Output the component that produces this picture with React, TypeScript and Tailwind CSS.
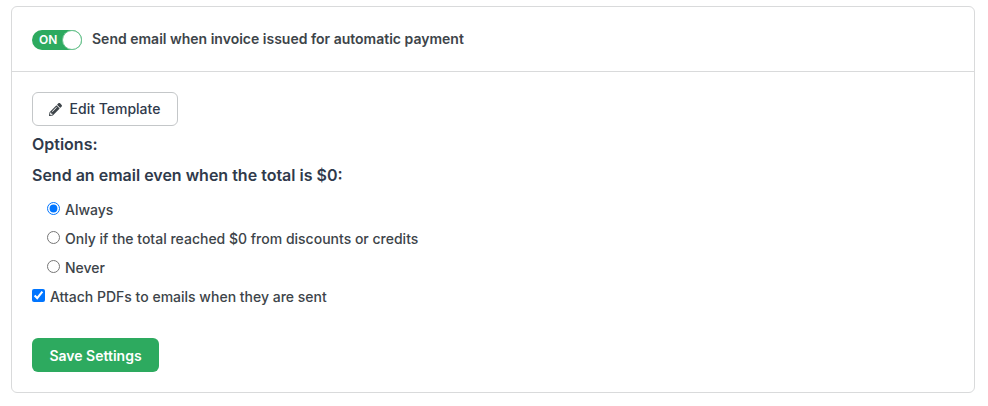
import React from "react";
import { FaPencilAlt } from "react-icons/fa";

export default function App() {
  return (
    <div className="w-[988px] h-[406px] bg-white pt-[6px] pl-[11px] font-['Inter',sans-serif] text-[#3d4449]">
      <div className="w-[964px] h-[387px] border border-[#d9dadb] rounded-[6px]">
        <div className="h-[65px] border-b border-[#d9dadb] flex items-center pl-[20px] gap-[10px]">
          <div className="w-[50px] h-[20px] rounded-full bg-[#2daa5f] relative flex items-center mt-[1px]">
            <span className="text-white text-[12px] font-semibold pl-[7px]">ON</span>
            <span className="absolute right-0 top-0 w-[20px] h-[20px] bg-white rounded-full border border-[#6cc490]" />
          </div>
          <span className="text-[14px] font-semibold leading-[20px] mb-[1px] text-[#3d4449]">Send email when invoice issued for automatic payment</span>
        </div>
        <div className="pl-[20px] pt-[20px]">
          <button className="h-[34px] w-[146px] border border-[#c4c7c9] rounded-[6px] flex items-center justify-center gap-[7px] text-[14px] font-medium text-[#303a4b] pr-[1px]">
            <FaPencilAlt className="w-[13px] h-[13px] text-[#3d4449]" />
            <span className="leading-[20px] mb-[1px] ml-[1px]">Edit Template</span>
          </button>
          <div className="mt-[8px] text-[16px] font-semibold text-[#303a4b] leading-[20px]">Options:</div>
          <div className="mt-[11px] text-[16px] font-semibold text-[#303a4b] leading-[20px]">Send an email even when the total is $0:</div>
          <div className="mt-[14px] pl-[15px] flex flex-col gap-[9px] text-[14px] font-medium">
            <label className="flex items-center gap-[5px] h-[20px]"><input type="radio" name="a" defaultChecked className="w-[13px] h-[13px] m-0 mb-[1px]" />Always</label>
            <label className="flex items-center gap-[5px] h-[20px]"><input type="radio" name="a" className="w-[13px] h-[13px] m-0 mb-[1px]" />Only if the total reached $0 from discounts or credits</label>
            <label className="flex items-center gap-[5px] h-[20px]"><input type="radio" name="a" className="w-[13px] h-[13px] m-0 mb-[1px]" />Never</label>
          </div>
          <label className="mt-[9px] flex items-center gap-[5px] h-[20px] text-[14px] font-medium"><input type="checkbox" defaultChecked className="w-[13px] h-[13px] m-0 mb-[1px]" />Attach PDFs to emails when they are sent</label>
          <button className="mt-[32px] h-[34px] w-[127px] rounded-[6px] bg-[#2daa5f] text-white text-[14px] font-semibold">Save Settings</button>
        </div>
      </div>
    </div>
  );
}
